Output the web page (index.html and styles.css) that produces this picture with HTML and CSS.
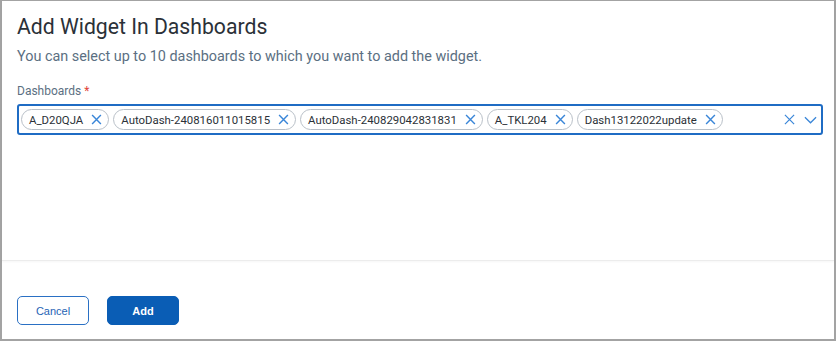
FILE: index.html
```html
<!DOCTYPE html>
<html lang="en">
<head>
    <meta charset="UTF-8">
    <title>Add Widget In Dashboards</title>
    <link rel="stylesheet" href="styles.css">
</head>
<body>
    <div class="dialog">
        <div class="dialog-body">
            <h1>Add Widget In Dashboards</h1>
            <p class="subtitle">You can select up to 10 dashboards to which you want to add the widget.</p>

            <label class="field-label">Dashboards <span class="required">*</span></label>
            <div class="select-box">
                <div class="chips">
                    <span class="chip">A_D20QJA<svg class="chip-x" viewBox="0 0 10 10"><path d="M1 1L9 9M9 1L1 9"/></svg></span>
                    <span class="chip">AutoDash-240816011015815<svg class="chip-x" viewBox="0 0 10 10"><path d="M1 1L9 9M9 1L1 9"/></svg></span>
                    <span class="chip">AutoDash-240829042831831<svg class="chip-x" viewBox="0 0 10 10"><path d="M1 1L9 9M9 1L1 9"/></svg></span>
                    <span class="chip">A_TKL204<svg class="chip-x" viewBox="0 0 10 10"><path d="M1 1L9 9M9 1L1 9"/></svg></span>
                    <span class="chip">Dash13122022update<svg class="chip-x" viewBox="0 0 10 10"><path d="M1 1L9 9M9 1L1 9"/></svg></span>
                </div>
                <div class="select-icons">
                    <svg class="clear-x" viewBox="0 0 12 12"><path d="M1 1L11 11M11 1L1 11"/></svg>
                    <svg class="chevron" viewBox="0 0 14 8"><path d="M1 1L7 7L13 1"/></svg>
                </div>
            </div>
        </div>

        <div class="dialog-footer">
            <button class="btn btn-outline">Cancel</button>
            <button class="btn btn-primary">Add</button>
        </div>
    </div>
</body>
</html>
```

FILE: styles.css
```css
html, body {
    margin: 0;
    height: 100%;
}
body {
    font-family: 'Roboto', 'Liberation Sans', sans-serif;
    background: #fff;
    color: #333;
}
.dialog {
    box-sizing: border-box;
    height: 341px;
    border-style: solid;
    border-color: #a3a3a3;
    border-width: 1px 2px 2px 2px;
    display: flex;
    flex-direction: column;
}
.dialog-body {
    flex: 1;
    padding: 12px 11px 0 15px;
    border-bottom: 1px solid #ececec;
    box-shadow: 0 1px 2px rgba(0, 0, 0, 0.04);
}
h1 {
    margin: 0;
    font-size: 21.2px;
    font-weight: 400;
    line-height: 28px;
    color: #2b3138;
}
.subtitle {
    margin: 6px 0 0;
    font-size: 14.4px;
    line-height: 20px;
    color: #5b6f82;
}
.field-label {
    display: block;
    margin-top: 16px;
    font-size: 12px;
    line-height: 16px;
    color: #5b6f82;
}
.required {
    color: #e0443a;
}
.select-box {
    margin-top: 5px;
    height: 31px;
    box-sizing: border-box;
    border: 2px solid #1f6cc4;
    border-radius: 3px;
    display: flex;
    align-items: center;
    justify-content: space-between;
    padding: 0 4px 0 2px;
}
.chips {
    display: flex;
    gap: 4px;
}
.chip {
    display: inline-flex;
    align-items: center;
    height: 21px;
    box-sizing: border-box;
    border: 1px solid #b9c0c8;
    border-radius: 11px;
    padding: 0 6px 0 7px;
    font-size: 11.4px;
    color: #2b3138;
    white-space: nowrap;
}
.chip-x {
    width: 11px;
    height: 11px;
    margin-left: 8px;
    fill: none;
    stroke: #3a86d8;
    stroke-width: 1.3;
}
.select-icons {
    display: flex;
    align-items: center;
    gap: 9px;
}
.clear-x {
    width: 11px;
    height: 11px;
    fill: none;
    stroke: #3a86d8;
    stroke-width: 1.3;
}
.chevron {
    width: 13px;
    height: 8px;
    fill: none;
    stroke: #3a86d8;
    stroke-width: 1.4;
}
.dialog-footer {
    height: 78px;
    box-sizing: border-box;
    padding: 35px 0 0 15px;
    display: flex;
    gap: 18px;
    align-items: flex-start;
}
.btn {
    width: 72px;
    height: 29px;
    border-radius: 5px;
    font-family: 'Liberation Sans', Arial, sans-serif;
    font-size: 11px;
    cursor: pointer;
}
.btn-outline {
    background: #fff;
    border: 1px solid #2a70c4;
    color: #1f63b5;
}
.btn-primary {
    background: #0a5db5;
    border: 1px solid #0a5db5;
    color: #fff;
    font-weight: bold;
}
```
